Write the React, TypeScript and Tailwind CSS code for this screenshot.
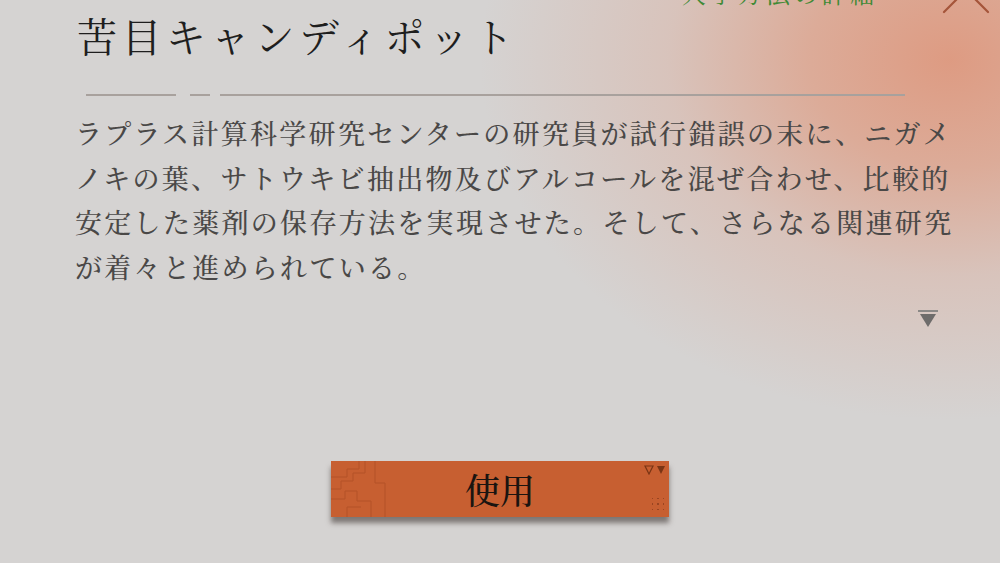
import React from "react";

const lines = [
  "ラプラス計算科学研究センターの研究員が試行錯誤の末に、ニガメ",
  "ノキの葉、サトウキビ抽出物及びアルコールを混ぜ合わせ、比較的",
  "安定した薬剤の保存方法を実現させた。そして、さらなる関連研究",
  "が着々と進められている。",
];

function CloseMark() {
  return (
    <svg width="60" height="30" viewBox="0 0 60 30" className="absolute right-[4px] top-[-16px]">
      <path d="M8 28 L30 6 M30 6 L52 28" stroke="#a5553a" strokeWidth="2.2" fill="none" strokeLinecap="round" />
    </svg>
  );
}

function MoreArrow() {
  return (
    <svg width="24" height="20" viewBox="0 0 24 20">
      <path d="M2 2 H22" stroke="#8a8886" strokeWidth="2" />
      <path d="M4 5 L20 5 L12 18 Z" fill="#6e6c6b" />
    </svg>
  );
}

function CircuitPattern() {
  return (
    <svg width="70" height="56" viewBox="0 0 70 56" className="absolute left-0 top-0">
      <g stroke="#a94a22" strokeWidth="1" fill="none" opacity="0.6">
        <path d="M0 16 H16 V8 H28 V0" />
        <path d="M0 28 H10 V20 H22 V12 H34 V0" />
        <path d="M0 38 H14 V30 H26 V40 H40 V56" />
        <path d="M16 56 V46 H30" />
        <path d="M44 0 V22 H54 V56" />
      </g>
    </svg>
  );
}

export default function App() {
  return (
    <div className="relative h-[563px] w-[1000px] overflow-hidden bg-[#d5d3d2] font-['Noto_Serif_CJK_JP','Noto_Sans_CJK_JP',serif]">
      {/* warm glow in the upper right corner */}
      <div className="absolute inset-0 bg-[radial-gradient(ellipse_470px_360px_at_950px_60px,rgba(222,152,126,0.95)_0%,rgba(222,160,136,0.78)_30%,rgba(220,176,160,0.45)_60%,rgba(213,211,210,0)_100%)]" />

      <div className="absolute left-[682px] top-[-25px] text-[24px] tracking-[4px] text-[#3f8a35]">入手方法の詳細</div>
      <CloseMark />

      <div className="relative flex flex-col">
        <h1 className="ml-[77px] mt-[12px] text-[40px] leading-[46px] tracking-[4.4px] text-[#1e1e1e]">苦目キャンディポット</h1>

        <div className="ml-[86px] mt-[36px] flex items-center">
          <div className="h-[2px] w-[90px] bg-[#a8a19d]" />
          <div className="ml-[14px] h-[2px] w-[20px] bg-[#a8a19d]" />
          <div className="ml-[10px] h-[2px] w-[685px] bg-[#a8a19d]" />
        </div>

        <div className="ml-[75px] mt-[15px] flex flex-col text-[27px] font-medium leading-[44.5px] tracking-[2.3px] text-[#4a4847]">
          {lines.map((l) => (
            <p key={l} className="whitespace-nowrap">{l}</p>
          ))}
        </div>

        <div className="mr-[60px] mt-[20px] flex justify-end">
          <MoreArrow />
        </div>

        <div className="mt-[132px] flex justify-center">
          <button className="relative flex h-[56px] w-[338px] items-center justify-center overflow-hidden bg-[#c75f31] shadow-[0_6px_5px_rgba(40,30,25,0.5)]">
            <CircuitPattern />
            <span className="relative text-[35px] font-medium leading-none text-[#1a1410]">使用</span>
            <div className="absolute right-[3px] top-[4px] flex gap-[2px]">
              <svg width="10" height="10" viewBox="0 0 10 10">
                <path d="M1 1 H9 L5 9 Z" fill="none" stroke="#7a3515" strokeWidth="1.2" />
              </svg>
              <svg width="10" height="10" viewBox="0 0 10 10">
                <path d="M1 1 H9 L5 9 Z" fill="#7a3515" />
              </svg>
            </div>
            <div className="absolute bottom-[7px] right-[5px] grid grid-cols-3 gap-[4px]">
              {Array.from({ length: 9 }).map((_, i) => (
                <div key={i} className="h-[1.5px] w-[1.5px] bg-[#9a4522]" />
              ))}
            </div>
          </button>
        </div>
      </div>
    </div>
  );
}
